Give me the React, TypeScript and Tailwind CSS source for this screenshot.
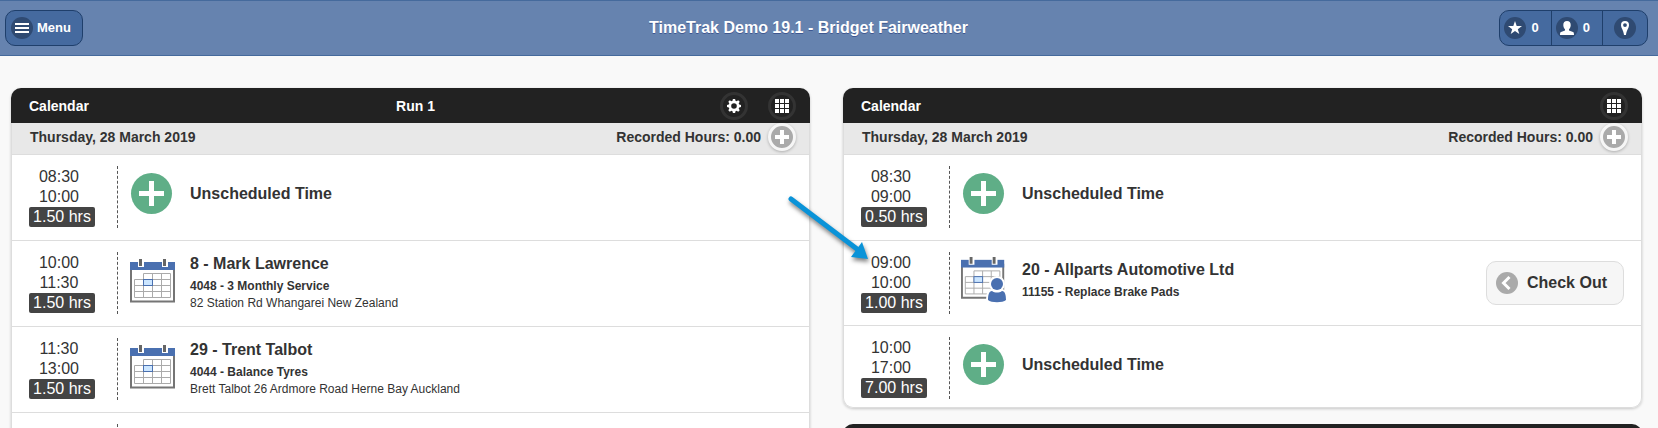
import type { ReactNode } from "react";

interface Entry {
  from: string;
  to: string;
  hours: string;
  kind: "free" | "job" | "active";
  title: string;
  detail?: string;
  address?: string;
  spacing?: string;
}

const leftEntries: Entry[] = [
  { from: "08:30", to: "10:00", hours: "1.50 hrs", kind: "free", title: "Unscheduled Time" },
  {
    from: "10:00",
    to: "11:30",
    hours: "1.50 hrs",
    kind: "job",
    title: "8 - Mark Lawrence",
    detail: "4048 - 3 Monthly Service",
    address: "82 Station Rd Whangarei New Zealand",
  },
  {
    from: "11:30",
    to: "13:00",
    hours: "1.50 hrs",
    kind: "job",
    title: "29 - Trent Talbot",
    detail: "4044 - Balance Tyres",
    address: "Brett Talbot 26 Ardmore Road Herne Bay Auckland",
  },
];

const rightEntries: Entry[] = [
  { from: "08:30", to: "09:00", hours: "0.50 hrs", kind: "free", title: "Unscheduled Time" },
  {
    from: "09:00",
    to: "10:00",
    hours: "1.00 hrs",
    kind: "active",
    title: "20 - Allparts Automotive Ltd",
    detail: "11155 - Replace Brake Pads",
    spacing: "pb-[11px]",
  },
  { from: "10:00", to: "17:00", hours: "7.00 hrs", kind: "free", title: "Unscheduled Time", spacing: "pb-2" },
];

function GearIcon() {
  return (
    <svg width="14" height="14" viewBox="0 0 14 14" fill="white">
      <path
        fillRule="evenodd"
        d="M5.9 0h2.2l.4 1.8 1.1.5L11.2 1.3l1.5 1.5-1 1.6.5 1.1L14 5.900v2.200l-1.800.4-.5 1.100 1 1.600-1.500 1.500-1.600-1-1.100.5L8.100 14H5.900l-.4-1.800-1.100-.5-1.600 1-1.500-1.500 1-1.600-.5-1.100L0 8.100V5.900l1.800-.4.5-1.100-1-1.600 1.500-1.500 1.600 1 1.100-.5zM7 4.200a2.800 2.800 0 1 0 0 5.600 2.800 2.800 0 0 0 0-5.600z"
      />
    </svg>
  );
}

function GridIcon() {
  return (
    <svg width="14" height="14" viewBox="0 0 14 14" fill="white">
      {[0, 5, 10].map((y) => [0, 5, 10].map((x) => <rect key={`${x}-${y}`} x={x} y={y} width="4" height="4" />))}
    </svg>
  );
}

function CalendarIcon({ active = false }: { active?: boolean }) {
  return (
    <svg width="45" height="45" viewBox="0 0 45 45" className="block overflow-visible">
      <g transform={active ? "translate(-1 -2) scale(0.96)" : undefined}>
        <path d="M1 8v35.5h43V8" fill="white" stroke="#757575" strokeWidth="2" />
        <rect y="4" width="45" height="8" fill="#4a70b0" />
        <path d="M8 0h6v9H8zM32 0h6v9h-6z" fill="white" />
        <path d="M9 1h3v7H9zM33 1h3v7h-3z" fill="#666" />
        <path
          d="M13.5 15.5h27v24h-36v-18h36M4.5 27.5h36M4.5 33.5h36M13.5 15.5v24M22.5 15.5v24M31.5 15.5v24"
          fill="none"
          stroke="#aaa"
        />
        <rect x="13.5" y="21.5" width="9" height="6" fill="#cce6ff" stroke="#4a70b0" />
      </g>
      {active && (
        <g fill="#4a70b0" stroke="white" strokeWidth="4" paintOrder="stroke">
          <path d="M26 42c0-5 1-9 4-9 3 2 7 2 10 0 3 0 4 4 4 9-3 3-15 3-18 0z" />
          <circle cx="35" cy="26" r="6" />
        </g>
      )}
    </svg>
  );
}

function PlusIcon() {
  return (
    <svg width="45" height="45" viewBox="0 0 45 45" className="block">
      <circle cx="21.5" cy="21.5" r="20.5" fill="#5fae87" />
      <path d="M19 9h5v10h10v5H24v10h-5V24H9v-5h10z" fill="white" />
    </svg>
  );
}

function RoundButton({ label, light = false, children }: { label: string; light?: boolean; children: ReactNode }) {
  return (
    <button
      aria-label={label}
      className={`flex size-7 shrink-0 items-center justify-center rounded-full border-3 ${
        light ? "border-[#f6f6f6] bg-[#aaa] shadow-[0_1px_3px_rgba(0,0,0,0.25)]" : "border-[#333] bg-[#222]"
      }`}
    >
      {children}
    </button>
  );
}

function Disc({ children }: { children: ReactNode }) {
  return <span className="flex size-[22px] items-center justify-center rounded-full bg-[#2f4a72]">{children}</span>;
}

function Arrow() {
  return (
    <svg
      width="100"
      height="80"
      viewBox="0 0 100 80"
      className="pointer-events-none absolute -top-[50px] -left-[60px] z-10 drop-shadow-[1px_3px_2px_rgba(0,0,0,0.5)]"
    >
      <path d="M7 8 73 58" stroke="#0a93d8" strokeWidth="5" strokeLinecap="round" />
      <path d="M84 68 67 66 78 51z" fill="#0a93d8" />
    </svg>
  );
}

function Row({ entry }: { entry: Entry }) {
  return (
    <li
      className={`relative flex items-start border-t border-[#ddd] pt-[11px] pr-[17px] pl-[17px] ${entry.spacing ?? "pb-3"}`}
    >
      {entry.kind === "active" && <Arrow />}
      <div className="w-[66px] shrink-0 pt-px text-center text-base leading-5">
        <div className="pr-1.5">{entry.from}</div>
        <div className="pr-1.5">{entry.to}</div>
        <div className="rounded-xs bg-[#444] text-white">{entry.hours}</div>
      </div>
      <div className="ml-[22px] h-[62px] shrink-0 border-l border-dashed border-[#555]" />
      <div className="mt-1.5 ml-3 shrink-0">
        {entry.kind === "free" ? <PlusIcon /> : <CalendarIcon active={entry.kind === "active"} />}
      </div>
      <div className="mt-0.5 ml-[15px] flex min-h-[52px] min-w-0 flex-1 flex-col justify-center text-xs leading-[17px]">
        <h3 className="text-base leading-5 font-bold">{entry.title}</h3>
        {entry.detail && <p className="mt-1 font-bold">{entry.detail}</p>}
        {entry.address && <p>{entry.address}</p>}
      </div>
      {entry.kind === "active" && (
        <button className="flex h-11 items-center gap-[9px] self-center rounded-[10px] border border-[#ddd] bg-[#f6f6f6] pr-4 pl-[9px] text-base font-bold">
          <svg width="22" height="22" viewBox="0 0 22 22">
            <circle cx="11" cy="11" r="11" fill="#aaa" />
            <path d="M13.5 5 7.5 11l6 6" fill="none" stroke="white" strokeWidth="3" />
          </svg>
          Check Out
        </button>
      )}
    </li>
  );
}

function CardHeader({ title, run }: { title?: string; run?: string }) {
  return (
    <div className="grid h-[35px] grid-cols-3 items-center rounded-t-[10px] bg-[#222] pr-3.5 pl-[18px] text-sm font-bold text-white">
      <h2>{title}</h2>
      <span className="pl-1.5 text-center">{run}</span>
      <div className="flex justify-end gap-5">
        {run && (
          <RoundButton label="Settings">
            <GearIcon />
          </RoundButton>
        )}
        <RoundButton label="Layout">
          <GridIcon />
        </RoundButton>
      </div>
    </div>
  );
}

function CalendarCard({ run, entries, children }: { run?: string; entries: Entry[]; children?: ReactNode }) {
  return (
    <section className="rounded-[10px] shadow-[0_1px_3px_rgba(0,0,0,0.2)]">
      <CardHeader title="Calendar" run={run} />
      <div className="rounded-b-[10px] border-x border-b border-[#ddd] bg-white">
        <div className="flex h-[31px] items-center bg-[#e8e8e8] pr-[13px] pb-[3px] pl-[18px] text-sm font-bold">
          <span className="flex-1">Thursday, 28 March 2019</span>
          <span className="mr-[7px]">Recorded Hours: 0.00</span>
          <RoundButton label="Add time" light>
            <svg width="14" height="14" viewBox="0 0 14 14" fill="white">
              <path d="M5 0h4v5h5v4H9v5H5V9H0V5h5z" />
            </svg>
          </RoundButton>
        </div>
        <ul>
          {entries.map((entry) => (
            <Row key={entry.from} entry={entry} />
          ))}
          {children}
        </ul>
      </div>
    </section>
  );
}

export default function App() {
  return (
    <div className="h-screen overflow-hidden bg-[#f9f9f9] font-['Liberation_Sans',Arial,sans-serif] text-[#333]">
      <header className="flex h-14 items-center justify-between border-y border-[#456a9c] bg-[#6683af] pr-2.5 pl-[5px] text-[13px] font-bold text-white text-shadow-[0_1px_0_#3e5790]">
        <div className="flex flex-1">
          <button className="flex h-9 items-center gap-1 rounded-[10px] border border-[#1f3f6b] bg-[#456a9f] pr-[11px] pl-[5px]">
            <Disc>
              <svg width="14" height="10" viewBox="0 0 14 10" fill="white">
                <path d="M0 0h14v2H0zM0 4h14v2H0zM0 8h14v2H0z" />
              </svg>
            </Disc>
            Menu
          </button>
        </div>
        <h1 className="pr-9 text-base">TimeTrak Demo 19.1 - Bridget Fairweather</h1>
        <div className="flex flex-1 justify-end">
          <div className="flex h-9 divide-x divide-[#1f3f6b] rounded-[10px] border border-[#1f3f6b] bg-[#456a9f]">
            <button className="flex items-center gap-1.5 pr-3 pl-1" aria-label="Favourites">
              <Disc>
                <svg width="14" height="14" viewBox="0 0 14 14" fill="white">
                  <path d="M7 0l1.7 5H14L9.8 8.2 11.3 13 7 10.1 2.7 13l1.5-4.8L0 5h5.3z" />
                </svg>
              </Disc>
              0
            </button>
            <button className="flex items-center gap-[5px] pr-3 pl-1" aria-label="Contacts">
              <Disc>
                <svg width="14" height="14" viewBox="0 0 14 14" fill="white">
                  <path d="M7 0c2.4 0 3.7 1.5 3.7 4 0 1.9-.7 3.4-1.7 4.2v1.2l4 1.6c.7.3 1 .9 1 3H0c0-2.1.3-2.7 1-3l4-1.600V8.200C4 7.400 3.300 5.900 3.300 4 3.300 1.500 4.600 0 7 0z" />
                </svg>
              </Disc>
              0
            </button>
            <button className="flex items-center px-[11px]" aria-label="Location">
              <Disc>
                <svg width="14" height="14" viewBox="0 0 14 14" fill="white">
                  <path
                    fillRule="evenodd"
                    d="M7 0a4 4 0 0 1 4 4c0 3-2.500 5-3 10H6c-.5-5-3-7-3-10a4 4 0 0 1 4-4zm0 2.200a1.900 1.900 0 1 0 0 3.800 1.900 1.900 0 0 0 0-3.800z"
                  />
                </svg>
              </Disc>
            </button>
          </div>
        </div>
      </header>

      <main className="grid grid-cols-2 items-start gap-x-[33px] pt-8 pr-4 pl-[11px]">
        <CalendarCard run="Run 1" entries={leftEntries}>
          <li className="border-t border-[#ddd] pt-[11px] pb-3 pl-[105px]">
            <div className="h-[62px] border-l border-dashed border-[#555]" />
          </li>
        </CalendarCard>
        <div className="space-y-4">
          <CalendarCard entries={rightEntries} />
          <CardHeader />
        </div>
      </main>
    </div>
  );
}
